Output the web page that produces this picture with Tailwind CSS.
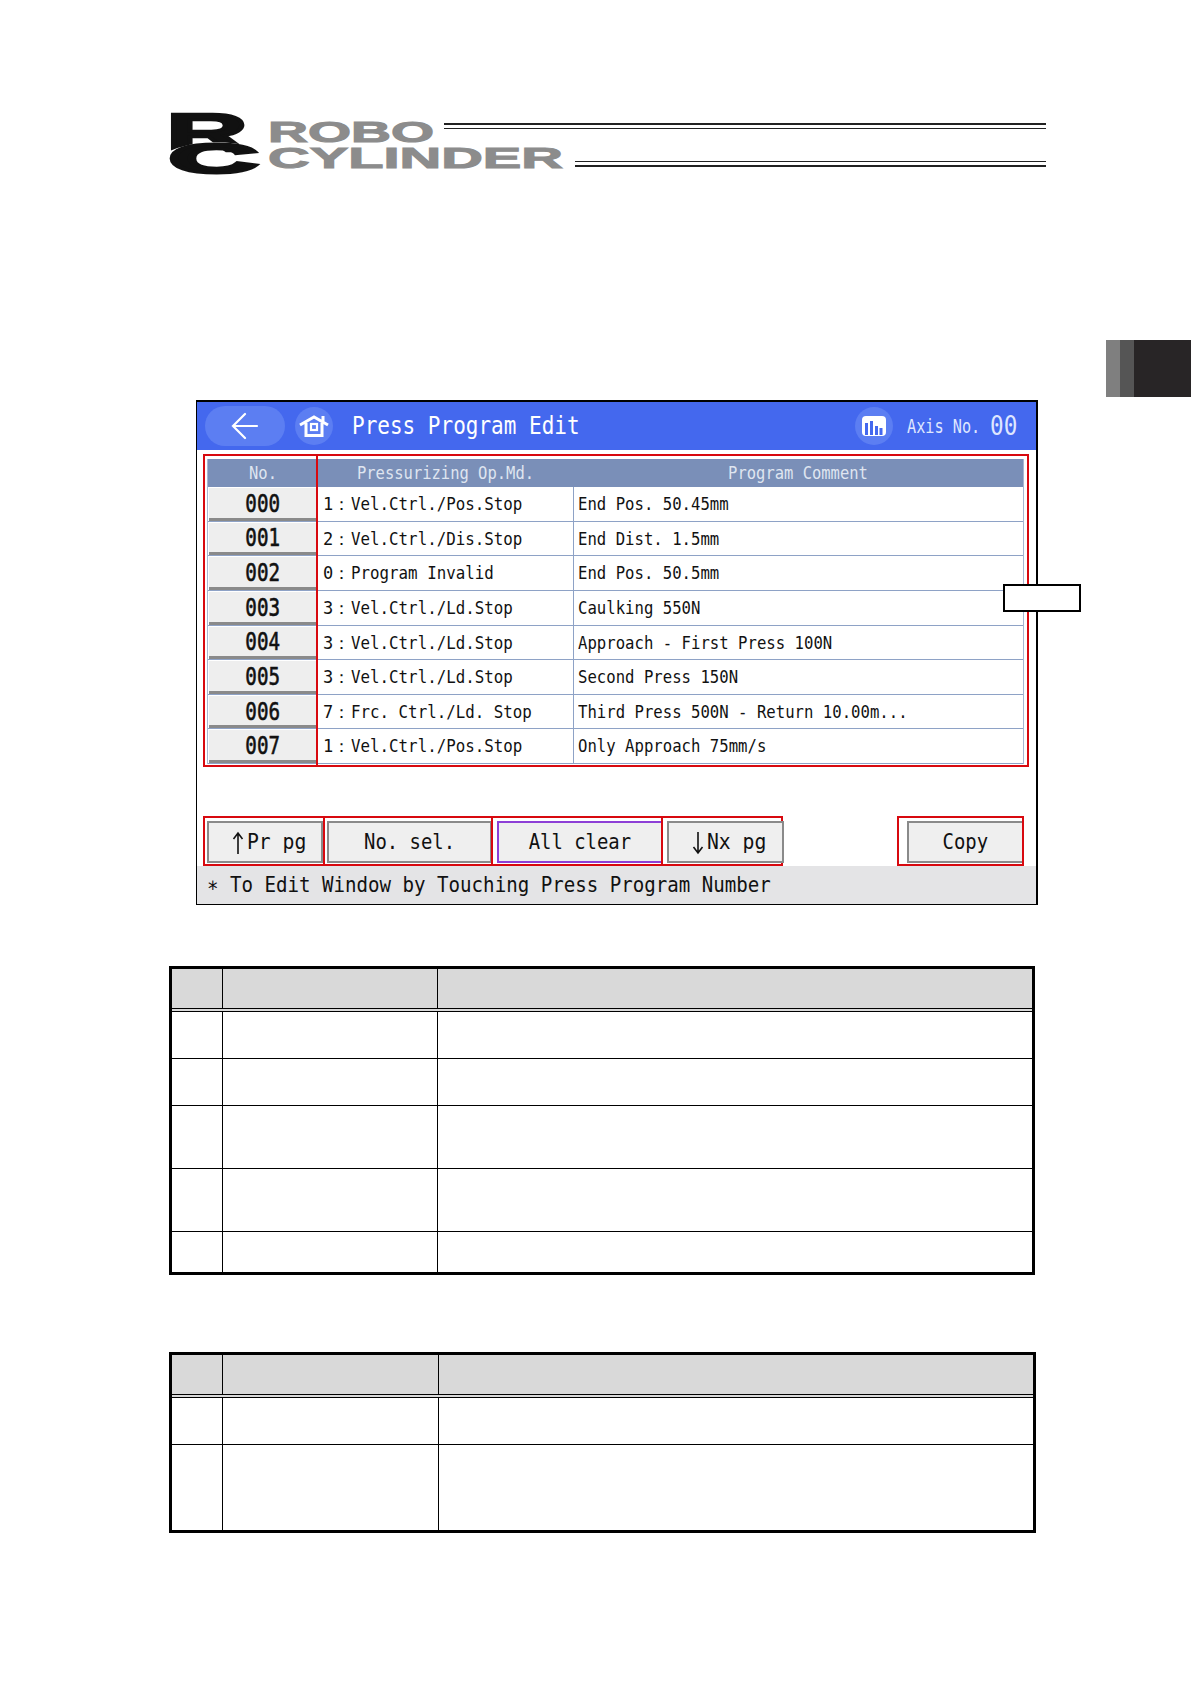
<!DOCTYPE html>
<html lang="en">
  <head>
    <meta charset="UTF-8" />
    <meta name="viewport" content="width=device-width, initial-scale=1.0" />
    <title>Press Program Edit</title>
    <script src="https://cdn.jsdelivr.net/npm/@tailwindcss/browser@4"></script>
  </head>
  <body class="bg-white">
    <div class="relative w-[1191px] h-[1684px] overflow-hidden pl-[169px] pt-[113px] font-['DejaVu_Sans_Mono',monospace]">
      <!-- Logo -->
      <header class="flex w-[877px] h-[62px]">
        <svg class="w-[91px] h-[62px] shrink-0 overflow-visible" viewBox="0 0 91 62">
          <text x="-3" y="38" font-family="Liberation Sans" font-weight="bold" font-size="54" textLength="82" lengthAdjust="spacingAndGlyphs" fill="#111" stroke="#111" stroke-width="2.5">R</text>
          <path d="M-3 41 Q38 23 90 37" fill="none" stroke="#fff" stroke-width="3" />
          <text x="0" y="60" font-family="Liberation Sans" font-weight="bold" font-size="42" textLength="89" lengthAdjust="spacingAndGlyphs" fill="#111" stroke="#111" stroke-width="3">C</text>
        </svg>
        <div class="flex-1 ml-[8px] flex flex-col">
          <div class="flex h-[33px] pt-[7px]">
            <svg class="w-[167px] h-[24px] shrink-0 overflow-visible" viewBox="0 0 167 24">
              <text x="0" y="22" font-family="Liberation Sans" font-weight="bold" font-size="29" textLength="166" lengthAdjust="spacingAndGlyphs" fill="#8c8c8c" stroke="#8c8c8c" stroke-width="1">ROBO</text>
            </svg>
            <div class="flex-1 ml-[9px] mt-[3px] h-[6px] border-t-2 border-b border-t-[#222] border-b-[#222]"></div>
          </div>
          <div class="flex h-[29px] -mt-px">
            <svg class="w-[296px] h-[24px] shrink-0 overflow-visible" viewBox="0 0 296 24">
              <text x="0" y="23" font-family="Liberation Sans" font-weight="bold" font-size="29" textLength="295" lengthAdjust="spacingAndGlyphs" fill="#8c8c8c" stroke="#8c8c8c" stroke-width="1">CYLINDER</text>
            </svg>
            <div class="flex-1 ml-[11px] mt-[16px] h-[6px] border-t border-b-2 border-t-[#222] border-b-[#222]"></div>
          </div>
        </div>
      </header>

      <!-- Screen -->
      <section class="relative mt-[225px] ml-[27px] w-[842px] h-[505px] border-t-2 border-r-2 border-l border-b border-black bg-white flex flex-col">
        <div class="h-[48px] shrink-0 bg-[#4468ee] flex items-center pl-[8px] pr-[20px] text-white">
          <div class="w-[80px] h-[40px] rounded-full bg-[#5c7ef2] flex items-center justify-center">
            <svg class="w-[30px] h-[30px]" viewBox="0 0 30 30" fill="none" stroke="#fff" stroke-width="2.2" stroke-linecap="round">
              <path d="M27 15H3M15 3L3 15l12 12" />
            </svg>
          </div>
          <div class="ml-[10px] w-[38px] h-[38px] rounded-full bg-[#5c7ef2] flex items-center justify-center">
            <svg class="w-[30px] h-[30px]" viewBox="0 0 30 30" fill="none" stroke="#fff" stroke-width="3">
              <path d="M1 14L15 6l14 8M7 12v12.5h16V12M24 12V5" />
              <rect x="12" y="13" width="6" height="6" stroke-width="2.2" />
            </svg>
          </div>
          <span class="ml-[19px] w-[300px] inline-block origin-left scale-x-[.84] whitespace-nowrap text-[25px]">Press Program Edit</span>
          <div class="ml-auto w-[38px] h-[38px] rounded-full bg-[#5c7ef2] flex items-center justify-center">
            <svg class="w-[26px] h-[26px]" viewBox="0 0 26 26">
              <rect x="1" y="2" width="24" height="20" rx="4" fill="#fff" transform="translate(0 1)" />
              <path d="M5.5 22V10M10.5 22V8M15.5 22V13M20 22V15" stroke="#4468ee" stroke-width="3" />
            </svg>
          </div>
          <span class="ml-[14px] w-[74px] inline-block origin-left scale-x-[.8] whitespace-nowrap text-[19px] text-[#dfe6ff]">Axis No.</span>
          <span class="ml-[9px] w-[26px] inline-block origin-left scale-x-[.84] whitespace-nowrap text-[27px] text-[#dfe6ff]">00</span>
        </div>

        <div class="relative mt-[4px] ml-[6px] mr-[7px] h-[313px] shrink-0 border-2 border-[#d8090f] py-[3px] pl-[2px] pr-[3px]">
          <div class="border-x border-[#a9b6d2] text-[17px]">
            <div class="grid grid-cols-[110px_255px_1fr] h-[28px] pb-[2px] bg-[#7a8fb8] text-[18px] text-[#dfe5f0] items-center text-center">
              <span class="inline-block scale-x-[.86] whitespace-nowrap">No.</span>
              <span class="inline-block scale-x-[.86] whitespace-nowrap">Pressurizing Op.Md.</span>
              <span class="inline-block scale-x-[.86] whitespace-nowrap">Program Comment</span>
            </div>
            <div class="grid grid-rows-8 h-[277px] text-[#111]">
              <div class="grid grid-cols-[110px_255px_1fr] min-h-0 border-b border-[#8ea2c6]">
                <div class="min-h-0 mx-px mt-px pt-[2px] bg-[#eeeeee] border-b-[3px] border-[#8a8a8a] flex items-center justify-center"><span class="inline-block leading-none scale-x-[.8] text-[24px] [-webkit-text-stroke:.6px_#111]">000</span></div>
                <div class="pl-[5px] pt-[2px] flex items-center"><span class="w-[28px]">1：</span><span class="inline-block origin-left scale-x-[.93] whitespace-pre">Vel.Ctrl./Pos.Stop</span></div>
                <div class="pl-[4px] pt-[2px] flex items-center border-l border-[#8ea2c6]"><span class="inline-block origin-left scale-x-[.92] whitespace-pre">End Pos. 50.45mm</span></div>
              </div>
              <div class="grid grid-cols-[110px_255px_1fr] min-h-0 border-b border-[#8ea2c6]">
                <div class="min-h-0 mx-px mt-px pt-[2px] bg-[#eeeeee] border-b-[3px] border-[#8a8a8a] flex items-center justify-center"><span class="inline-block leading-none scale-x-[.8] text-[24px] [-webkit-text-stroke:.6px_#111]">001</span></div>
                <div class="pl-[5px] pt-[2px] flex items-center"><span class="w-[28px]">2：</span><span class="inline-block origin-left scale-x-[.93] whitespace-pre">Vel.Ctrl./Dis.Stop</span></div>
                <div class="pl-[4px] pt-[2px] flex items-center border-l border-[#8ea2c6]"><span class="inline-block origin-left scale-x-[.92] whitespace-pre">End Dist. 1.5mm</span></div>
              </div>
              <div class="grid grid-cols-[110px_255px_1fr] min-h-0 border-b border-[#8ea2c6]">
                <div class="min-h-0 mx-px mt-px pt-[2px] bg-[#eeeeee] border-b-[3px] border-[#8a8a8a] flex items-center justify-center"><span class="inline-block leading-none scale-x-[.8] text-[24px] [-webkit-text-stroke:.6px_#111]">002</span></div>
                <div class="pl-[5px] pt-[2px] flex items-center"><span class="w-[28px]">0：</span><span class="inline-block origin-left scale-x-[.93] whitespace-pre">Program Invalid</span></div>
                <div class="pl-[4px] pt-[2px] flex items-center border-l border-[#8ea2c6]"><span class="inline-block origin-left scale-x-[.92] whitespace-pre">End Pos. 50.5mm</span></div>
              </div>
              <div class="grid grid-cols-[110px_255px_1fr] min-h-0 border-b border-[#8ea2c6]">
                <div class="min-h-0 mx-px mt-px pt-[2px] bg-[#eeeeee] border-b-[3px] border-[#8a8a8a] flex items-center justify-center"><span class="inline-block leading-none scale-x-[.8] text-[24px] [-webkit-text-stroke:.6px_#111]">003</span></div>
                <div class="pl-[5px] pt-[2px] flex items-center"><span class="w-[28px]">3：</span><span class="inline-block origin-left scale-x-[.93] whitespace-pre">Vel.Ctrl./Ld.Stop</span></div>
                <div class="pl-[4px] pt-[2px] flex items-center border-l border-[#8ea2c6]"><span class="inline-block origin-left scale-x-[.92] whitespace-pre">Caulking 550N</span></div>
              </div>
              <div class="grid grid-cols-[110px_255px_1fr] min-h-0 border-b border-[#8ea2c6]">
                <div class="min-h-0 mx-px mt-px pt-[2px] bg-[#eeeeee] border-b-[3px] border-[#8a8a8a] flex items-center justify-center"><span class="inline-block leading-none scale-x-[.8] text-[24px] [-webkit-text-stroke:.6px_#111]">004</span></div>
                <div class="pl-[5px] pt-[2px] flex items-center"><span class="w-[28px]">3：</span><span class="inline-block origin-left scale-x-[.93] whitespace-pre">Vel.Ctrl./Ld.Stop</span></div>
                <div class="pl-[4px] pt-[2px] flex items-center border-l border-[#8ea2c6]"><span class="inline-block origin-left scale-x-[.92] whitespace-pre">Approach - First Press 100N</span></div>
              </div>
              <div class="grid grid-cols-[110px_255px_1fr] min-h-0 border-b border-[#8ea2c6]">
                <div class="min-h-0 mx-px mt-px pt-[2px] bg-[#eeeeee] border-b-[3px] border-[#8a8a8a] flex items-center justify-center"><span class="inline-block leading-none scale-x-[.8] text-[24px] [-webkit-text-stroke:.6px_#111]">005</span></div>
                <div class="pl-[5px] pt-[2px] flex items-center"><span class="w-[28px]">3：</span><span class="inline-block origin-left scale-x-[.93] whitespace-pre">Vel.Ctrl./Ld.Stop</span></div>
                <div class="pl-[4px] pt-[2px] flex items-center border-l border-[#8ea2c6]"><span class="inline-block origin-left scale-x-[.92] whitespace-pre">Second Press 150N</span></div>
              </div>
              <div class="grid grid-cols-[110px_255px_1fr] min-h-0 border-b border-[#8ea2c6]">
                <div class="min-h-0 mx-px mt-px pt-[2px] bg-[#eeeeee] border-b-[3px] border-[#8a8a8a] flex items-center justify-center"><span class="inline-block leading-none scale-x-[.8] text-[24px] [-webkit-text-stroke:.6px_#111]">006</span></div>
                <div class="pl-[5px] pt-[2px] flex items-center"><span class="w-[28px]">7：</span><span class="inline-block origin-left scale-x-[.93] whitespace-pre">Frc. Ctrl./Ld. Stop</span></div>
                <div class="pl-[4px] pt-[2px] flex items-center border-l border-[#8ea2c6]"><span class="inline-block origin-left scale-x-[.92] whitespace-pre">Third Press 500N - Return 10.00m...</span></div>
              </div>
              <div class="grid grid-cols-[110px_255px_1fr] min-h-0 border-b border-[#8ea2c6]">
                <div class="min-h-0 mx-px mt-px pt-[2px] bg-[#eeeeee] border-b-[3px] border-[#8a8a8a] flex items-center justify-center"><span class="inline-block leading-none scale-x-[.8] text-[24px] [-webkit-text-stroke:.6px_#111]">007</span></div>
                <div class="pl-[5px] pt-[2px] flex items-center"><span class="w-[28px]">1：</span><span class="inline-block origin-left scale-x-[.93] whitespace-pre">Vel.Ctrl./Pos.Stop</span></div>
                <div class="pl-[4px] pt-[2px] flex items-center border-l border-[#8ea2c6]"><span class="inline-block origin-left scale-x-[.92] whitespace-pre">Only Approach 75mm/s</span></div>
              </div>
            </div>
          </div>
          <!-- red divider over the table -->
          <div class="absolute left-[111px] -top-[2px] -bottom-[2px] w-[2px] bg-[#d8090f]"></div>
        </div>

        <!-- Buttons -->
        <div class="mt-[49px] ml-[6px] mr-[7px] h-[50px] shrink-0 flex text-[21px] text-[#111]">
          <div class="w-[122px] border-2 border-[#d8090f] pt-[3px] pl-[2px] pb-px">
            <button class="w-[116px] h-full pt-[2px] pl-[10px] bg-[#efefef] border-2 border-[#8a8a8a] flex items-center justify-center gap-px">
              <svg class="w-[12px] h-[24px]" viewBox="0 0 12 24" fill="none" stroke="#111" stroke-width="1.6"><path d="M6 23V2M1.5 8L6 2l4.5 6" /></svg>
              <span class="inline-block scale-x-[.94] whitespace-pre">Pr pg</span>
            </button>
          </div>
          <div class="w-[170px] -ml-[2px] border-2 border-[#d8090f] pt-[3px] pl-[2px] pb-px">
            <button class="w-[165px] h-full pt-[2px] bg-[#efefef] border-2 border-[#8a8a8a] flex items-center justify-center"><span class="inline-block scale-x-[.9] whitespace-pre">No. sel.</span></button>
          </div>
          <div class="w-[172px] -ml-[2px] border-2 border-[#d8090f] pt-[3px] pl-[4px] pb-px">
            <button class="w-[166px] h-full pt-[2px] bg-[#efefef] border-2 border-[#8d3fd6] flex items-center justify-center"><span class="inline-block scale-x-[.9] whitespace-pre">All clear</span></button>
          </div>
          <div class="w-[122px] -ml-[2px] border-2 border-[#d8090f] pt-[3px] pl-[4px] pb-px">
            <button class="w-[117px] h-full pt-[2px] pl-[10px] bg-[#efefef] border-2 border-[#8a8a8a] flex items-center justify-center gap-px">
              <svg class="w-[12px] h-[24px]" viewBox="0 0 12 24" fill="none" stroke="#111" stroke-width="1.6"><path d="M6 1v21M1.5 16L6 22l4.5-6" /></svg>
              <span class="inline-block scale-x-[.94] whitespace-pre">Nx pg</span>
            </button>
          </div>
          <div class="ml-auto mr-[5px] w-[127px] border-2 border-[#d8090f] pt-[3px] pl-[8px] pb-px">
            <button class="w-[115px] h-full pt-[2px] bg-[#efefef] border-2 border-r-0 border-[#8a8a8a] flex items-center justify-center"><span class="inline-block scale-x-[.9] whitespace-pre">Copy</span></button>
          </div>
        </div>

        <div class="flex-1 pt-[2px] bg-[#e4e4e6] flex items-center pl-[10px] text-[21px] text-[#111]">
          <span class="inline-block origin-left scale-x-[.91] whitespace-pre">∗ To Edit Window by Touching Press Program Number</span>
        </div>

        <!-- blank label over the frame -->
        <div class="absolute left-[806px] top-[182px] w-[78px] h-[28px] bg-white border-2 border-black"></div>
      </section>

      <!-- Table 1 -->
      <div class="mt-[61px] w-[866px] h-[309px] border-[3px] border-black flex flex-col">
        <div class="grid grid-cols-[51px_215px_1fr] h-[43px] bg-[#d9d9d9] border-b-4 border-double border-black">
          <div class="border-r border-black"></div>
          <div class="border-r border-black"></div>
          <div></div>
        </div>
        <div class="grid grid-cols-[51px_215px_1fr] h-[47px] border-b border-black">
          <div class="border-r border-black"></div>
          <div class="border-r border-black"></div>
          <div></div>
        </div>
        <div class="grid grid-cols-[51px_215px_1fr] h-[47px] border-b border-black">
          <div class="border-r border-black"></div>
          <div class="border-r border-black"></div>
          <div></div>
        </div>
        <div class="grid grid-cols-[51px_215px_1fr] h-[63px] border-b border-black">
          <div class="border-r border-black"></div>
          <div class="border-r border-black"></div>
          <div></div>
        </div>
        <div class="grid grid-cols-[51px_215px_1fr] h-[63px] border-b border-black">
          <div class="border-r border-black"></div>
          <div class="border-r border-black"></div>
          <div></div>
        </div>
        <div class="grid grid-cols-[51px_215px_1fr] flex-1">
          <div class="border-r border-black"></div>
          <div class="border-r border-black"></div>
          <div></div>
        </div>
      </div>

      <!-- Table 2 -->
      <div class="mt-[77px] w-[867px] h-[181px] border-[3px] border-black flex flex-col">
        <div class="grid grid-cols-[51px_216px_1fr] h-[43px] bg-[#d9d9d9] border-b-4 border-double border-black">
          <div class="border-r border-black"></div>
          <div class="border-r border-black"></div>
          <div></div>
        </div>
        <div class="grid grid-cols-[51px_216px_1fr] h-[47px] border-b border-black">
          <div class="border-r border-black"></div>
          <div class="border-r border-black"></div>
          <div></div>
        </div>
        <div class="grid grid-cols-[51px_216px_1fr] flex-1">
          <div class="border-r border-black"></div>
          <div class="border-r border-black"></div>
          <div></div>
        </div>
      </div>

      <!-- Chapter tab on the page edge -->
      <div class="absolute left-[1106px] top-[340px] w-[85px] h-[57px] flex">
        <div class="w-[14px] bg-[#7f7f7f]"></div>
        <div class="w-[14px] bg-[#555555]"></div>
        <div class="flex-1 bg-[#282526]"></div>
      </div>
    </div>
  </body>
</html>
